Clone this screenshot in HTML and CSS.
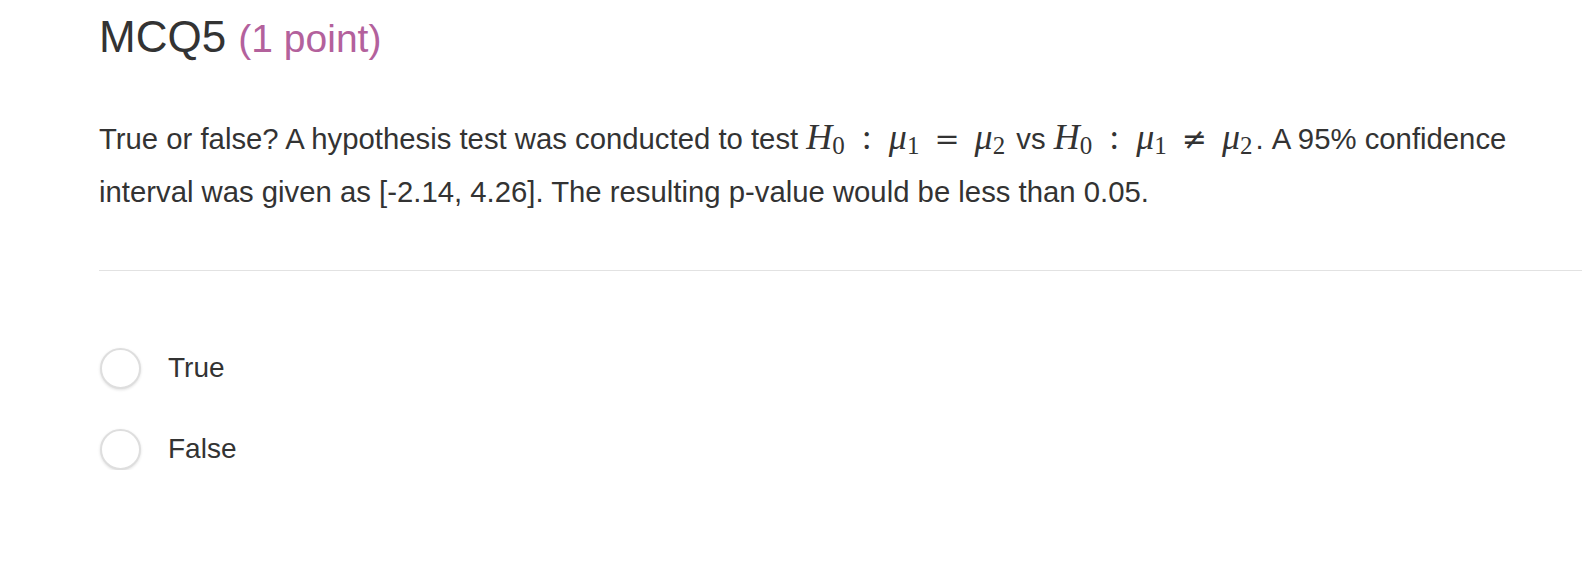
FILE: index.html
```html
<!DOCTYPE html>
<html>
<head>
<meta charset="utf-8">
<link rel="stylesheet" href="styles.css">
</head>
<body>
<div class="page">
  <h1 class="title">MCQ5 <span class="points">(1 point)</span></h1>
  <p class="question">True or false? A hypothesis test was conducted to test <span class="math"><i>H</i><sub>0</sub><span class="op">:</span><i>μ</i><sub>1</sub><span class="rel">=</span><i>μ</i><sub>2</sub></span> vs <span class="math"><i>H</i><sub>0</sub><span class="op">:</span><i>μ</i><sub>1</sub><span class="rel">≠</span><i>μ</i><sub>2</sub></span>. A 95% confidence interval was given as [-2.14, 4.26]. The resulting p-value would be less than 0.05.</p>
  <hr class="divider">
  <div class="options">
    <label class="option"><span class="radio"></span><span class="label">True</span></label>
    <label class="option"><span class="radio"></span><span class="label">False</span></label>
  </div>
</div>
</body>
</html>
```

FILE: styles.css
```css
html, body {
  margin: 0;
  padding: 0;
  background: #fff;
}
.page {
  padding-left: 99px;
  font-family: "Liberation Sans", Arial, sans-serif;
  color: #333;
}
.title {
  margin: 0;
  padding-top: 11px;
  font-size: 44px;
  font-weight: normal;
  line-height: 52px;
  color: #333;
}
.points {
  font-size: 39px;
  color: #b3619c;
}
.question {
  margin: 47px 0 0 0;
  font-size: 29.3px;
  line-height: 53px;
  width: 1470px;
}
.math {
  font-family: "Liberation Serif", "Times New Roman", serif;
  font-size: 36px;
  line-height: 1;
  white-space: nowrap;
  padding-right: 3px;
}
.math i {
  font-style: italic;
}
.math sub {
  font-size: 25px;
  vertical-align: -5px;
  line-height: 0;
}
.math .op {
  padding: 0 17px;
}
.math .rel {
  padding: 0 15px;
  font-family: "DejaVu Serif", serif;
  font-size: 30px;
}
.divider {
  margin: 52px 0 0 0;
  border: 0;
  border-top: 1px solid #e2e2e2;
  height: 0;
}
.options {
  display: flex;
  flex-direction: column;
  gap: 39px;
  padding-top: 76px;
}
.option {
  display: flex;
  align-items: center;
  gap: 27px;
  height: 42px;
}
.radio {
  box-sizing: border-box;
  width: 41px;
  height: 41px;
  margin-left: 1px;
  border-radius: 50%;
  border: 2px solid #dedede;
  box-shadow: 0 1px 3px rgba(0,0,0,0.12);
  background: #fff;
}
.label {
  font-size: 28px;
  color: #333;
}
```
